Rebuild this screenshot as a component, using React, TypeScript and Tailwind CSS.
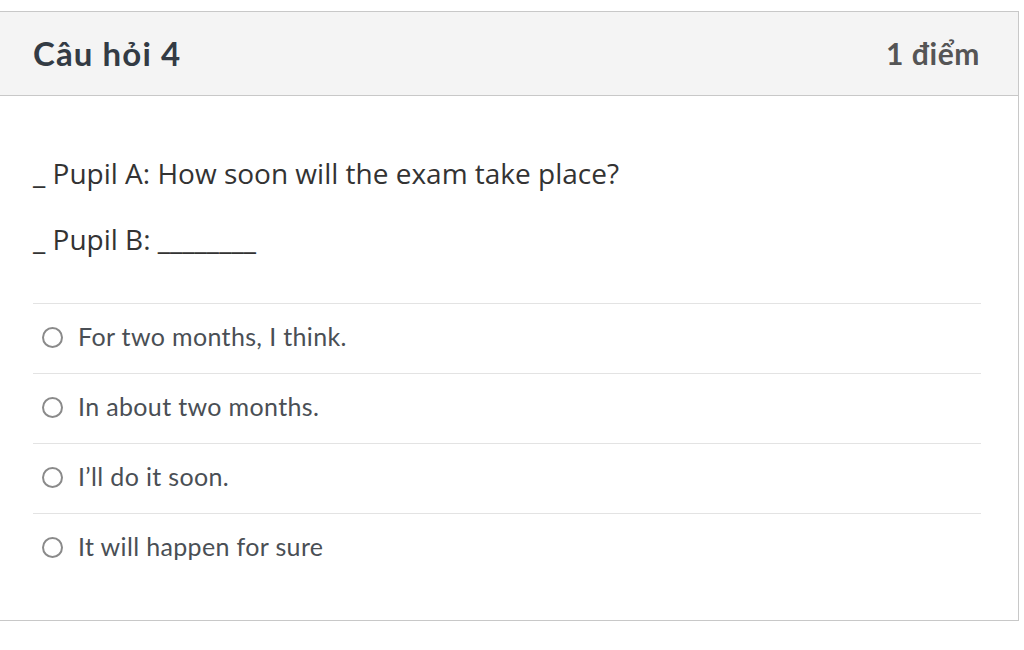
const options = [
  "For two months, I think.",
  "In about two months.",
  "I’ll do it soon.",
  "It will happen for sure",
];

export default function App() {
  return (
    <div className="w-[1024px] h-[650px] bg-white pt-[11px]">
      <div className="w-[1019px] border border-l-0 border-[#c8c8c8] bg-white">
        {/* Header */}
        <div className="h-[84px] flex items-center justify-between pl-[33px] pr-[38px] bg-[#f4f4f4] border-b border-[#c8c8c8] font-['Lato',sans-serif]">
          <h2 className="text-[33px] font-bold text-[#333b44] tracking-[1.1px]">Câu hỏi 4</h2>
          <span className="text-[30px] font-bold text-[#555] tracking-[0.6px]">1 điểm</span>
        </div>

        {/* Body */}
        <div className="pl-[33px] pr-[37px] pt-[60px] pb-[37px]">
          <div className="font-['Open_Sans',sans-serif] text-[28px] text-[#333] leading-[34px] flex flex-col gap-[32px]">
            <p>_ Pupil A: How soon will the exam take place?</p>
            <p>_ Pupil B: ________</p>
          </div>

          <ul className="mt-[47px] font-['Lato',sans-serif]">
            {options.map((o) => (
              <li
                key={o}
                className="h-[70px] border-t border-[#e3e3e3] flex items-center pl-[9px] pb-[3px] gap-[15px]"
              >
                <span className="w-[21px] h-[21px] rounded-full border-2 border-[#8a8a8a] shrink-0" />
                <span className="text-[25px] text-[#4a4f55] tracking-[0.35px]">{o}</span>
              </li>
            ))}
          </ul>
        </div>
      </div>
    </div>
  );
}
